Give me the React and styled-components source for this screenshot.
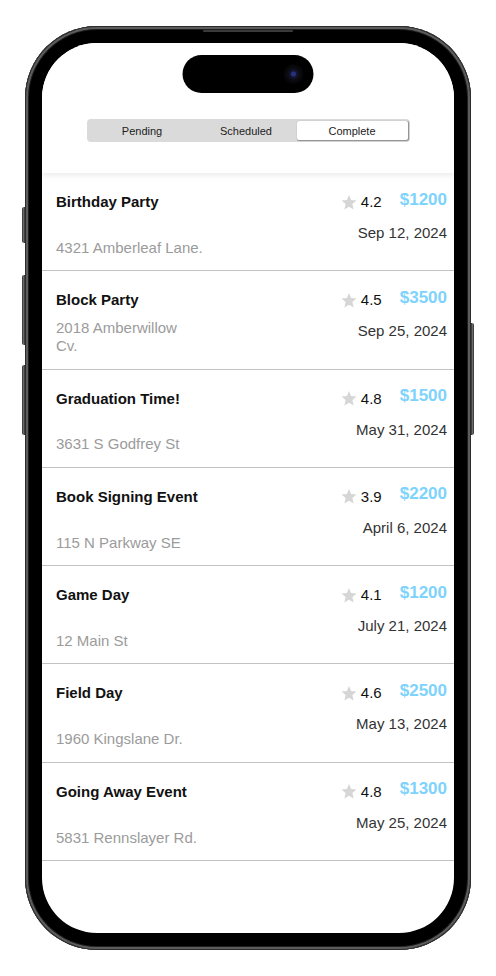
import React, { useState } from 'react'
import styled, { createGlobalStyle } from 'styled-components'

const GlobalStyle = createGlobalStyle`
  html, body {
    margin: 0;
    padding: 0;
    background: #fff;
  }
  body {
    font-family: "Liberation Sans", Helvetica, Arial, sans-serif;
  }
  * {
    box-sizing: border-box;
  }
`

const Stage = styled.div`
  width: 496px;
  height: 976px;
  display: flex;
  align-items: center;
  justify-content: center;
`

const Phone = styled.div`
  position: relative;
  width: 446px;
  height: 924px;
  padding: 17px;
  border-radius: 72px;
  background: #000;
  box-shadow:
    inset 0 0 0 1px #2b2b2b,
    inset 0 0 0 3px #5c5c5c,
    inset 0 0 0 4px #1e1e1e;
`

const SideButton = styled.span`
  position: absolute;
  top: ${p => p.top}px;
  height: ${p => p.h}px;
  width: 3px;
  background: linear-gradient(90deg, #2a2a2a, #6a6a6a 50%, #2a2a2a);
  ${p => (p.right ? 'right: -3px; border-radius: 0 2px 2px 0;' : 'left: -3px; border-radius: 2px 0 0 2px;')}
`

const Speaker = styled.span`
  position: absolute;
  top: 4px;
  left: 178px;
  width: 90px;
  height: 2px;
  border-radius: 1px;
  background: #3a3a3a;
`

const Screen = styled.div`
  position: relative;
  width: 412px;
  height: 890px;
  border-radius: 55px;
  background: #fff;
  overflow: hidden;
  display: flex;
  flex-direction: column;
`

const Island = styled.div`
  position: absolute;
  top: 12px;
  left: 50%;
  transform: translateX(-50%);
  width: 131px;
  height: 38px;
  border-radius: 19px;
  background: #000;
  z-index: 5;
`

const Lens = styled.span`
  position: absolute;
  right: 10px;
  top: 9px;
  width: 20px;
  height: 20px;
  border-radius: 50%;
  background: radial-gradient(circle, #2a2f7a 0 2px, #141633 3px, #0b0b12 6px, #050505 10px);
`

const Header = styled.header`
  position: relative;
  z-index: 2;
  height: 130px;
  flex-shrink: 0;
  display: flex;
  justify-content: center;
  padding-top: 76px;
  background: #fff;
  box-shadow: 0 2px 6px rgba(0, 0, 0, 0.09);
`

const Segmented = styled.div`
  width: 323px;
  height: 23px;
  padding: 2px;
  border-radius: 4px;
  background: #dadada;
  display: grid;
  grid-template-columns: 107px 101px 1fr;
`

const Segment = styled.button`
  border: 0;
  padding: 0;
  margin: 0;
  font-family: inherit;
  font-size: 11px;
  color: #1c1c1c;
  cursor: pointer;
  border-radius: 2px;
  background: ${p => (p.active ? '#fff' : 'transparent')};
  box-shadow: ${p => (p.active ? '0.5px 0.5px 1px rgba(0,0,0,0.35)' : 'none')};
`

const List = styled.div`
  display: flex;
  flex-direction: column;
`

const Row = styled.div`
  height: 98.3px;
  display: flex;
  justify-content: space-between;
  padding: 20px 7px 13px 14px;
  border-bottom: 1px solid #c3c3c3;
`

const Info = styled.div`
  display: flex;
  flex-direction: column;
  justify-content: space-between;
`

const Title = styled.div`
  font-size: 15px;
  line-height: 18px;
  font-weight: 700;
  color: #111;
`

const Address = styled.div`
  font-size: 15px;
  line-height: 18.5px;
  color: #9b9b9b;
  white-space: pre-line;
`

const Meta = styled.div`
  display: flex;
  flex-direction: column;
  align-items: flex-end;
`

const Stats = styled.div`
  display: flex;
  align-items: center;
  height: 18px;
`

const Rating = styled.span`
  margin-left: 4px;
  font-size: 15px;
  line-height: 18px;
  color: #111;
`

const Price = styled.span`
  margin-left: 18px;
  margin-bottom: 5px;
  font-size: 17px;
  line-height: 18px;
  font-weight: 700;
  color: #7dd3fc;
`

const DateText = styled.div`
  margin-top: 13px;
  font-size: 15px;
  line-height: 18px;
  color: #333;
`

const Star = () => (
  <svg width="16" height="15" viewBox="0 0 24 23" fill="#d6d6d6">
    <polygon points="12 0 15.2 7.6 23.5 8.4 17.2 13.9 19.1 22.2 12 17.9 4.9 22.2 6.8 13.9 0.5 8.4 8.8 7.6" />
  </svg>
)

const events = [
  { title: 'Birthday Party', address: '4321 Amberleaf Lane.', rating: '4.2', price: '$1200', date: 'Sep 12, 2024' },
  { title: 'Block Party', address: '2018 Amberwillow\nCv.', rating: '4.5', price: '$3500', date: 'Sep 25, 2024' },
  { title: 'Graduation Time!', address: '3631 S Godfrey St', rating: '4.8', price: '$1500', date: 'May 31, 2024' },
  { title: 'Book Signing Event', address: '115 N Parkway SE', rating: '3.9', price: '$2200', date: 'April 6, 2024' },
  { title: 'Game Day', address: '12 Main St', rating: '4.1', price: '$1200', date: 'July 21, 2024' },
  { title: 'Field Day', address: '1960 Kingslane Dr.', rating: '4.6', price: '$2500', date: 'May 13, 2024' },
  { title: 'Going Away Event', address: '5831 Rennslayer Rd.', rating: '4.8', price: '$1300', date: 'May 25, 2024' },
]

const tabs = ['Pending', 'Scheduled', 'Complete']

const App = () => {
  const [tab, setTab] = useState('Complete')

  return (
    <Stage>
      <GlobalStyle />
      <Phone>
        <Speaker />
        <SideButton top={181} h={36} />
        <SideButton top={249} h={70} />
        <SideButton top={339} h={70} />
        <SideButton right top={297} h={112} />
        <Screen>
          <Island>
            <Lens />
          </Island>
          <Header>
            <Segmented>
              {tabs.map(t => (
                <Segment key={t} active={tab === t} onClick={() => setTab(t)}>
                  {t}
                </Segment>
              ))}
            </Segmented>
          </Header>
          <List>
            {events.map(ev => (
              <Row key={ev.title}>
                <Info>
                  <Title>{ev.title}</Title>
                  <Address>{ev.address}</Address>
                </Info>
                <Meta>
                  <Stats>
                    <Star />
                    <Rating>{ev.rating}</Rating>
                    <Price>{ev.price}</Price>
                  </Stats>
                  <DateText>{ev.date}</DateText>
                </Meta>
              </Row>
            ))}
          </List>
        </Screen>
      </Phone>
    </Stage>
  )
}

export default App
